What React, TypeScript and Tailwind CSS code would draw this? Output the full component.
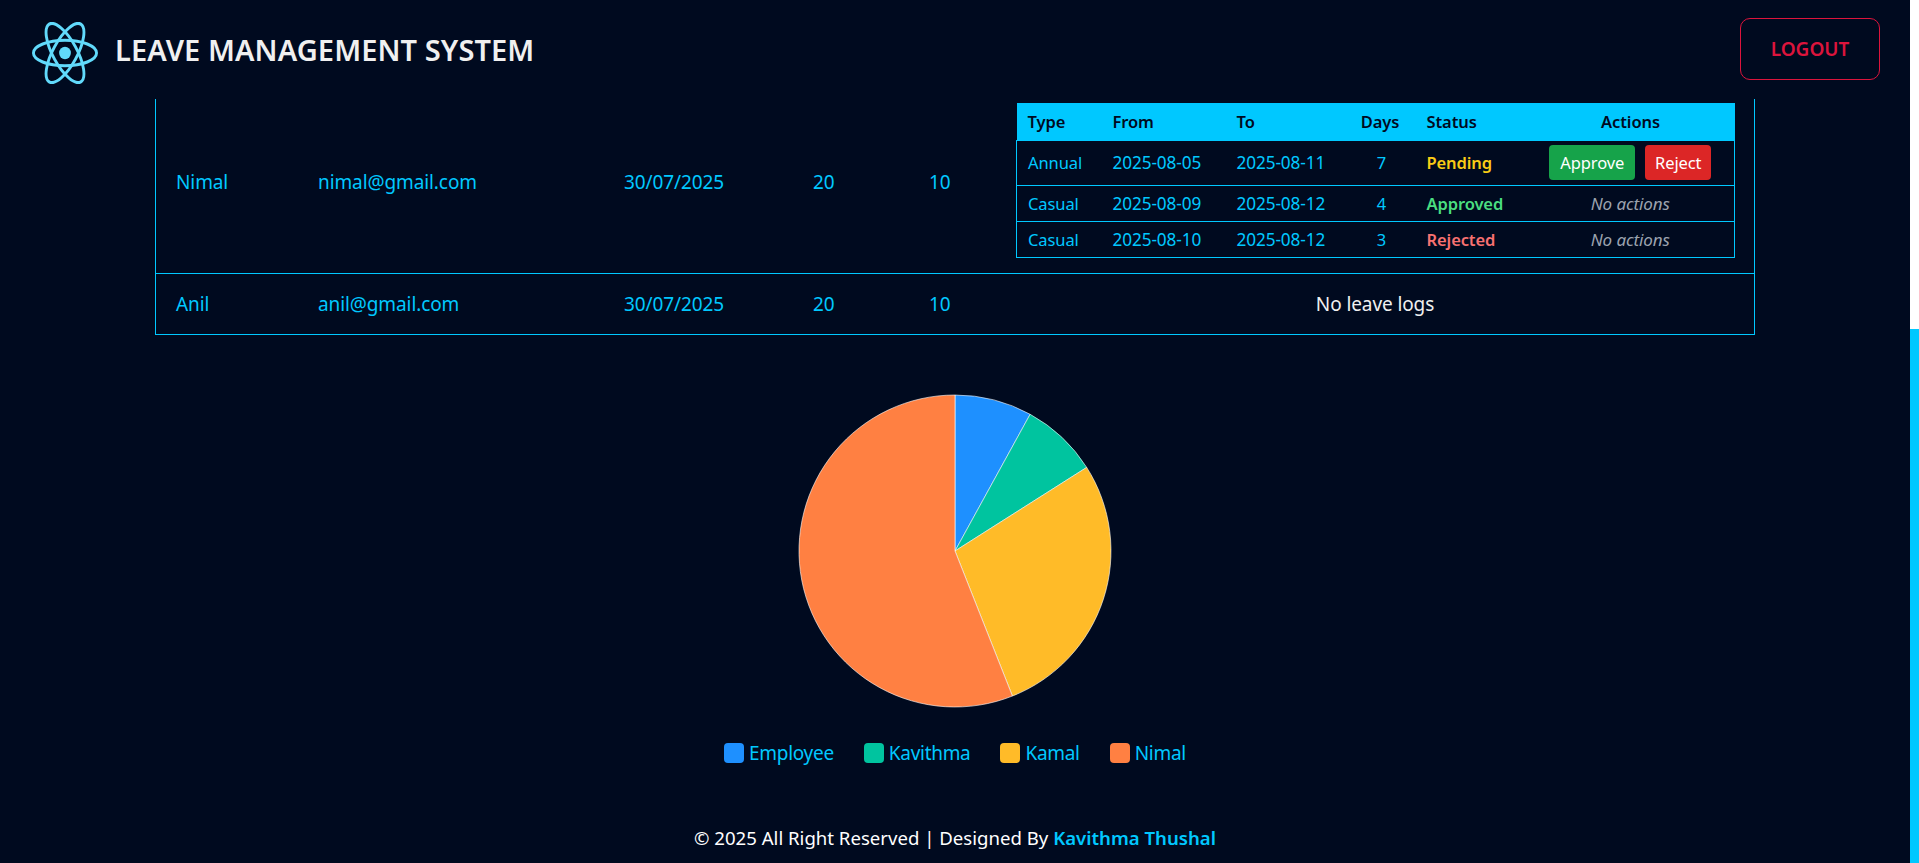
const logs = [
  { type: "Annual", from: "2025-08-05", to: "2025-08-11", days: 7, status: "Pending", color: "text-[#facc15]", h: "h-[45px]", pad: "" },
  { type: "Casual", from: "2025-08-09", to: "2025-08-12", days: 4, status: "Approved", color: "text-[#4ade80]", h: "h-[36px]", pad: "pt-[2px]" },
  { type: "Casual", from: "2025-08-10", to: "2025-08-12", days: 3, status: "Rejected", color: "text-[#f87171]", h: "h-[36px]", pad: "pt-[2px]" },
];

const legend = [
  { name: "Employee", color: "bg-[#1e90ff]" },
  { name: "Kavithma", color: "bg-[#00c49f]" },
  { name: "Kamal", color: "bg-[#ffbb28]" },
  { name: "Nimal", color: "bg-[#ff8042]" },
];

function polar(deg: number) {
  const r = (deg * Math.PI) / 180;
  return `${156 * Math.sin(r)} ${-156 * Math.cos(r)}`;
}

function slice(a: number, b: number) {
  const large = b - a > 180 ? 1 : 0;
  return `M0 0L${polar(a)}A156 156 0 ${large} 1 ${polar(b)}Z`;
}

function Logo() {
  return (
    <svg width="66" height="62" viewBox="-11.5 -10.23 23 20.46" preserveAspectRatio="none" className="mt-[8px] shrink-0">
      <circle r="2.05" fill="#61dafb" />
      <g fill="none" stroke="#61dafb" strokeWidth="1">
        <ellipse rx="11" ry="4.2" />
        <ellipse rx="11" ry="4.2" transform="rotate(60)" />
        <ellipse rx="11" ry="4.2" transform="rotate(120)" />
      </g>
    </svg>
  );
}

function Pie() {
  return (
    <svg width="316" height="316" viewBox="-158 -158 316 316" className="block">
      <g stroke="#ffffff" strokeWidth="0.6">
        <path d={slice(0, 28.8)} fill="#1e90ff" />
        <path d={slice(28.8, 57.6)} fill="#00c49f" />
        <path d={slice(57.6, 158.4)} fill="#ffbb28" />
        <path d={slice(158.4, 360)} fill="#ff8042" />
      </g>
    </svg>
  );
}

function LeaveTable() {
  return (
    <table className="w-[718px] table-fixed border-collapse text-[16.5px] leading-[22px]">
      <colgroup>
        <col className="w-[84px]" />
        <col className="w-[124px]" />
        <col className="w-[121px]" />
        <col className="w-[69px]" />
        <col className="w-[112px]" />
        <col className="w-[208px]" />
      </colgroup>
      <thead>
        <tr className="h-[37px] bg-[#00c8ff] text-left font-semibold text-[#000a1f]">
          <th className="pl-[11px] font-semibold">Type</th>
          <th className="pl-[12px] font-semibold">From</th>
          <th className="pl-[12px] font-semibold">To</th>
          <th className="text-center font-semibold">Days</th>
          <th className="pl-[12px] font-semibold">Status</th>
          <th className="text-center font-semibold">Actions</th>
        </tr>
      </thead>
      <tbody>
        {logs.map((l) => (
          <tr key={l.from} className={`${l.h} border border-[#00c8ff] text-[#00c8ff]`}>
            <td className={`pl-[11px] ${l.pad}`}>{l.type}</td>
            <td className={`pl-[12px] text-[17.2px] ${l.pad}`}>{l.from}</td>
            <td className={`pl-[12px] text-[17.2px] ${l.pad}`}>{l.to}</td>
            <td className={`pl-[3px] text-center ${l.pad}`}>{l.days}</td>
            <td className={`pl-[12px] font-semibold ${l.color} ${l.pad}`}>{l.status}</td>
            <td className={`text-center ${l.pad}`}>
              {l.status === "Pending" ? (
                <div className="flex justify-center gap-[10px]">
                  <button className="h-[35px] w-[86px] rounded bg-[#16a34a] text-white">Approve</button>
                  <button className="h-[35px] w-[66px] rounded bg-[#dc2626] text-white">Reject</button>
                </div>
              ) : (
                <span className="text-[17px] italic text-[#9ca3af]">No actions</span>
              )}
            </td>
          </tr>
        ))}
      </tbody>
    </table>
  );
}

export default function App() {
  return (
    <div className="flex h-[863px] w-full overflow-hidden bg-white font-['Noto_Sans',sans-serif]">
      <div className="flex h-full min-w-0 flex-1 flex-col bg-[#000a1f]">
        <header className="flex h-[99px] shrink-0 items-center justify-between pb-px pl-[32px] pr-[30px]">
          <div className="flex items-center gap-[17px]">
            <Logo />
            <h1 className="text-[29px] font-semibold leading-none tracking-[0.1px] text-[#f0f0f0]">LEAVE MANAGEMENT SYSTEM</h1>
          </div>
          <button className="h-[62px] w-[140px] rounded-[10px] border border-[#dc143c] text-[19px] font-semibold text-[#dc143c]">LOGOUT</button>
        </header>

        <main className="min-h-0 flex-1 overflow-hidden">
          <div className="-mt-[12px] flex flex-col items-center">
            <table className="w-[1600px] table-fixed border-separate border-spacing-0 border border-[#00c8ff] text-[19px] leading-[26px] tracking-[-0.1px] text-[#00c8ff]">
              <colgroup>
                <col className="w-[142px]" />
                <col className="w-[306px]" />
                <col className="w-[189px]" />
                <col className="w-[116px]" />
                <col className="w-[87px]" />
                <col className="w-[758px]" />
              </colgroup>
              <tbody>
                <tr className="h-[185px]">
                  <td className="pl-[20px] pt-[2px]">Nimal</td>
                  <td className="pl-[20px] pt-[2px]">nimal@gmail.com</td>
                  <td className="pl-[20px] pt-[2px]">30/07/2025</td>
                  <td className="pl-[20px] pt-[2px]">20</td>
                  <td className="pl-[20px] pt-[2px]">10</td>
                  <td className="px-[20px]">
                    <LeaveTable />
                  </td>
                </tr>
                <tr className="h-[61px]">
                  <td className="border-t border-[#00c8ff] pl-[20px]">Anil</td>
                  <td className="border-t border-[#00c8ff] pl-[20px]">anil@gmail.com</td>
                  <td className="border-t border-[#00c8ff] pl-[20px]">30/07/2025</td>
                  <td className="border-t border-[#00c8ff] pl-[20px]">20</td>
                  <td className="border-t border-[#00c8ff] pl-[20px]">10</td>
                  <td className="border-t border-[#00c8ff] text-center text-[#f0f0f0]">No leave logs</td>
                </tr>
              </tbody>
            </table>

            <div className="mt-[58px]">
              <Pie />
            </div>

            <ul className="mt-[32px] flex items-center gap-[30px] text-[19px] leading-[24px] tracking-[-0.3px] text-[#00c8ff]">
              {legend.map((l) => (
                <li key={l.name} className="flex items-center gap-[5px]">
                  <span className={`h-[20px] w-[20px] rounded ${l.color}`} />
                  {l.name}
                </li>
              ))}
            </ul>

            <footer className="mt-[61px] text-[18.6px] leading-[24px] text-white">
              © 2025 All Right Reserved | Designed By <span className="font-semibold text-[#00c8ff]">Kavithma Thushal</span>
            </footer>
          </div>
        </main>
      </div>
      <aside className="flex h-full w-[9px] shrink-0 flex-col bg-white">
        <div className="h-[329px] shrink-0" />
        <div className="flex-1 bg-[#00c8ff]" />
      </aside>
    </div>
  );
}
